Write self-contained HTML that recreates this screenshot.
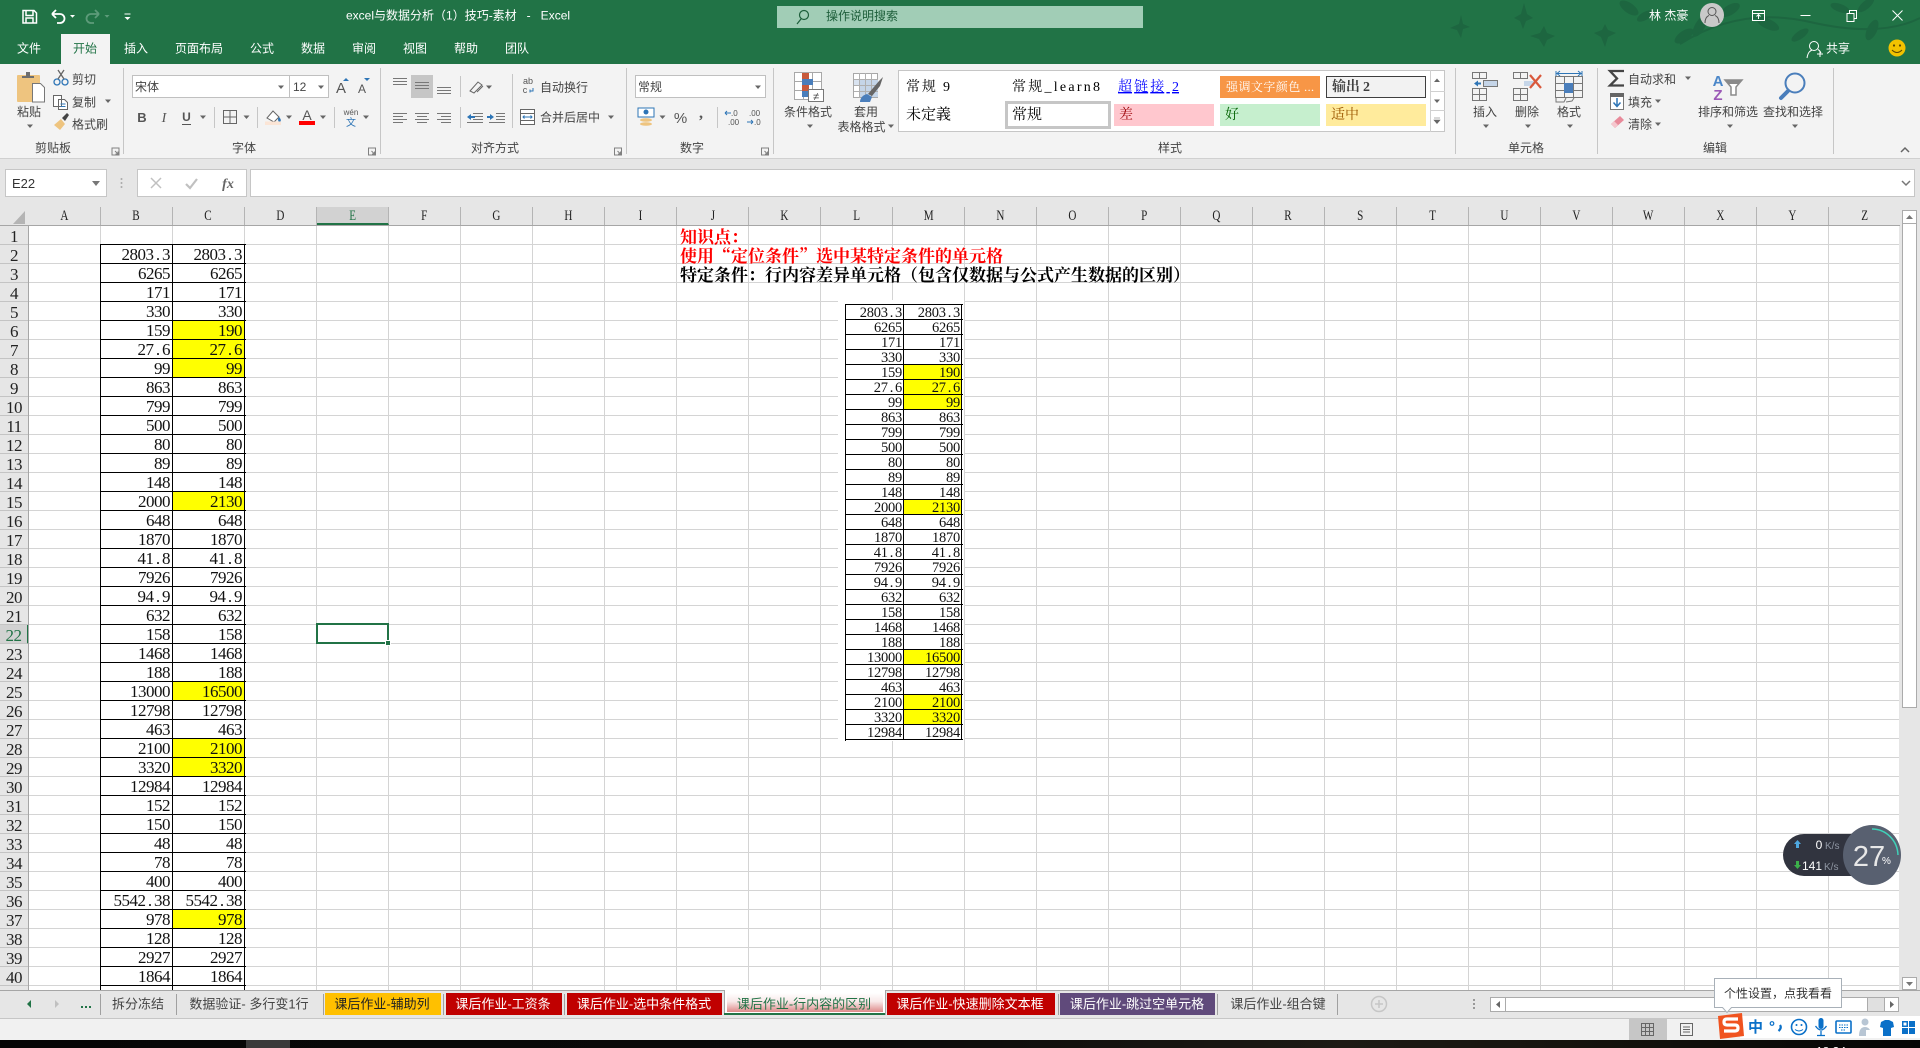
<!DOCTYPE html>
<html lang="zh"><head><meta charset="utf-8"><title>excel</title>
<style>
html,body{margin:0;padding:0;background:#fff}
#p{position:relative;width:1920px;height:1048px;overflow:hidden;background:#e6e6e6;font-family:"Liberation Sans","Noto Sans CJK SC",sans-serif}
#p>*{position:absolute}
#grid{left:29px;top:226px;width:1870px;height:764px;background-color:#fff;background-image:linear-gradient(to right,transparent 71px,#d4d4d4 71px),linear-gradient(to bottom,transparent 18px,#d4d4d4 18px);background-size:72px 19px}
#cols{left:29px;top:207px;height:18px;width:1871px;display:flex;overflow:hidden;background:#e6e6e6}
#cols span{flex:0 0 72px;box-sizing:border-box;border-right:1px solid #b4b4b4;height:18px;text-align:center;font:15px/18px "Liberation Serif",serif;color:#222}
#cols span i{display:inline-block;font-style:normal;transform:scaleX(.74)}
#cols span.e{background:#d2d2d2;color:#217346;border-bottom:2px solid #217346}
#hl{left:0;top:225px;width:1900px;height:1px;background:#a6a6a6}
#rows{left:0;top:226px;width:28px;height:764px;background:#e6e6e6;border-right:1px solid #a6a6a6;overflow:hidden}
#rows div{height:18px;border-bottom:1px solid #c4c4c4;text-align:center;font:17px/21px "Liberation Serif",serif;color:#222;letter-spacing:-.5px}
#rows div.e{background:#d2d2d2;color:#217346;border-right:2px solid #217346;margin-right:-1px}
.tb{border-left:1px solid #000;border-top:1px solid #000;color:#111;font-family:"Liberation Serif",serif;overflow:hidden}
.tb p{margin:0;display:flex;box-sizing:border-box;border-bottom:1px solid #000}
.tb b{font-weight:400;display:block;box-sizing:border-box;border-right:1px solid #000;text-align:right;white-space:nowrap}
.tb b.y{background:#ff0}
.tb u{text-decoration:none;display:inline-block;text-align:center}
#big{left:100px;top:244px;width:145px;height:745px;font-size:17px;letter-spacing:-.5px}
#big p{height:19px}
#big b{width:72px;padding-right:2px;line-height:20px;height:18px}
#big u{width:8.500px}
#pic{left:838px;top:300px;width:126px;height:441px;background:#fff}
#small{left:845px;top:304px;width:117px;height:436px;font-size:14.500px;letter-spacing:-.25px}
#small p{height:15px}
#small b{width:58px;padding-right:1px;line-height:16.500px;height:14px}
#small u{width:7.250px}
.k{left:680px;font:700 17px/19px "Noto Serif CJK SC",serif;white-space:nowrap}
#sel{left:316px;top:623px;width:69px;height:17px;border:2px solid #217346}
#sel:after{content:"";position:absolute;right:-4px;bottom:-4px;width:4px;height:4px;background:#217346;border:1px solid #fff}
#task{left:0;top:1040px;width:1920px;height:8px;background:linear-gradient(to right,#060606 0,#0a0a0a 45%,#1d1a14 70%,#17150f 80%,#050505 100%)}
#ui{left:0;top:0}
.t{font:12px "Liberation Sans","Noto Sans CJK SC",sans-serif;fill:#444;white-space:pre}
.m{text-anchor:middle}
.s{font-family:"Liberation Serif","Noto Serif CJK SC",serif;font-size:14px}
.l{font-size:13px}
</style></head><body><div id="p">
<div id="grid"></div>
<div id="cols"><span><i>A</i></span><span><i>B</i></span><span><i>C</i></span><span><i>D</i></span><span class="e"><i>E</i></span><span><i>F</i></span><span><i>G</i></span><span><i>H</i></span><span><i>I</i></span><span><i>J</i></span><span><i>K</i></span><span><i>L</i></span><span><i>M</i></span><span><i>N</i></span><span><i>O</i></span><span><i>P</i></span><span><i>Q</i></span><span><i>R</i></span><span><i>S</i></span><span><i>T</i></span><span><i>U</i></span><span><i>V</i></span><span><i>W</i></span><span><i>X</i></span><span><i>Y</i></span><span><i>Z</i></span></div>
<div id="hl"></div>
<div id="rows"><div>1</div><div>2</div><div>3</div><div>4</div><div>5</div><div>6</div><div>7</div><div>8</div><div>9</div><div>10</div><div>11</div><div>12</div><div>13</div><div>14</div><div>15</div><div>16</div><div>17</div><div>18</div><div>19</div><div>20</div><div>21</div><div class="e">22</div><div>23</div><div>24</div><div>25</div><div>26</div><div>27</div><div>28</div><div>29</div><div>30</div><div>31</div><div>32</div><div>33</div><div>34</div><div>35</div><div>36</div><div>37</div><div>38</div><div>39</div><div>40</div><div></div></div>
<div id="big" class="tb">
<p><b>2803<u>.</u>3</b><b>2803<u>.</u>3</b></p>
<p><b>6265</b><b>6265</b></p>
<p><b>171</b><b>171</b></p>
<p><b>330</b><b>330</b></p>
<p><b>159</b><b class="y">190</b></p>
<p><b>27<u>.</u>6</b><b class="y">27<u>.</u>6</b></p>
<p><b>99</b><b class="y">99</b></p>
<p><b>863</b><b>863</b></p>
<p><b>799</b><b>799</b></p>
<p><b>500</b><b>500</b></p>
<p><b>80</b><b>80</b></p>
<p><b>89</b><b>89</b></p>
<p><b>148</b><b>148</b></p>
<p><b>2000</b><b class="y">2130</b></p>
<p><b>648</b><b>648</b></p>
<p><b>1870</b><b>1870</b></p>
<p><b>41<u>.</u>8</b><b>41<u>.</u>8</b></p>
<p><b>7926</b><b>7926</b></p>
<p><b>94<u>.</u>9</b><b>94<u>.</u>9</b></p>
<p><b>632</b><b>632</b></p>
<p><b>158</b><b>158</b></p>
<p><b>1468</b><b>1468</b></p>
<p><b>188</b><b>188</b></p>
<p><b>13000</b><b class="y">16500</b></p>
<p><b>12798</b><b>12798</b></p>
<p><b>463</b><b>463</b></p>
<p><b>2100</b><b class="y">2100</b></p>
<p><b>3320</b><b class="y">3320</b></p>
<p><b>12984</b><b>12984</b></p>
<p><b>152</b><b>152</b></p>
<p><b>150</b><b>150</b></p>
<p><b>48</b><b>48</b></p>
<p><b>78</b><b>78</b></p>
<p><b>400</b><b>400</b></p>
<p><b>5542<u>.</u>38</b><b>5542<u>.</u>38</b></p>
<p><b>978</b><b class="y">978</b></p>
<p><b>128</b><b>128</b></p>
<p><b>2927</b><b>2927</b></p>
<p><b>1864</b><b>1864</b></p>
<p style="height:19px"><b>&nbsp;</b><b>&nbsp;</b></p>
</div>
<div class="k" style="top:226px;color:#f00">知识点：</div>
<div class="k" style="top:245px;color:#f00">使用“定位条件”选中某特定条件的单元格</div>
<div class="k" style="top:264px;color:#000">特定条件：行内容差异单元格（包含仅数据与公式产生数据的区别）</div>
<div id="pic"></div>
<div id="small" class="tb">
<p><b>2803<u>.</u>3</b><b>2803<u>.</u>3</b></p>
<p><b>6265</b><b>6265</b></p>
<p><b>171</b><b>171</b></p>
<p><b>330</b><b>330</b></p>
<p><b>159</b><b class="y">190</b></p>
<p><b>27<u>.</u>6</b><b class="y">27<u>.</u>6</b></p>
<p><b>99</b><b class="y">99</b></p>
<p><b>863</b><b>863</b></p>
<p><b>799</b><b>799</b></p>
<p><b>500</b><b>500</b></p>
<p><b>80</b><b>80</b></p>
<p><b>89</b><b>89</b></p>
<p><b>148</b><b>148</b></p>
<p><b>2000</b><b class="y">2130</b></p>
<p><b>648</b><b>648</b></p>
<p><b>1870</b><b>1870</b></p>
<p><b>41<u>.</u>8</b><b>41<u>.</u>8</b></p>
<p><b>7926</b><b>7926</b></p>
<p><b>94<u>.</u>9</b><b>94<u>.</u>9</b></p>
<p><b>632</b><b>632</b></p>
<p><b>158</b><b>158</b></p>
<p><b>1468</b><b>1468</b></p>
<p><b>188</b><b>188</b></p>
<p><b>13000</b><b class="y">16500</b></p>
<p><b>12798</b><b>12798</b></p>
<p><b>463</b><b>463</b></p>
<p><b>2100</b><b class="y">2100</b></p>
<p><b>3320</b><b class="y">3320</b></p>
<p><b>12984</b><b>12984</b></p>
</div>
<div id="sel"></div>
<div id="task"></div>
<svg id="ui" width="1920" height="1048" viewBox="0 0 1920 1048" xmlns="http://www.w3.org/2000/svg">
<defs>
<path id="ar" d="M-3-1.5h6l-3 3.5z" fill="#666"/>
<g id="la" fill="none" stroke="#808080"><path d="M-3.5-3.5h7v7h-7z"/><path d="M-.5-.5l3 3M2.5 0v2.5H0"/></g>
</defs>
<!-- title bar -->
<rect width="1920" height="64" fill="#217346"/>
<g fill="#1d6640">
<path d="M1450 28l9-4 2-9 2 9 7 3-7 2-2 9-4-8zM1514 18l7-4 3-11 3 11 6 4-7 3-3 8-3-8zM1530 36l10-3 4-7 3 7 8 3-8 4-3 7-5-8zM1594 33l8-3 3-6 3 6 8 3-8 4-3 10-4-10z"/>
<ellipse cx="1629" cy="8" rx="11" ry="5" transform="rotate(35 1629 8)"/><ellipse cx="1645" cy="16" rx="9" ry="4" transform="rotate(-30 1645 16)"/>
<ellipse cx="1684" cy="36" rx="11" ry="5" transform="rotate(-35 1684 36)"/><ellipse cx="1700" cy="26" rx="12" ry="5" transform="rotate(-60 1700 26)"/><ellipse cx="1730" cy="10" rx="11" ry="5" transform="rotate(-30 1730 10)"/><ellipse cx="1768" cy="24" rx="12" ry="5" transform="rotate(25 1768 24)"/><ellipse cx="1800" cy="35" rx="10" ry="4" transform="rotate(-35 1800 35)"/><ellipse cx="1840" cy="8" rx="10" ry="4" transform="rotate(20 1840 8)"/><ellipse cx="1872" cy="30" rx="11" ry="5" transform="rotate(-65 1872 30)"/><ellipse cx="1866" cy="5" rx="10" ry="4" transform="rotate(-40 1866 5)"/>
</g>
<path d="M1680 44q60-38 130-22t110-4" stroke="#1d6640" stroke-width="2" fill="none"/>
<path d="M23 10.500h11l2.500 2.500v10h-13.500zM26 10.500v5h7v-5M26 23v-5h7v5" stroke="#fff" stroke-width="1.500" fill="none"/>
<path d="M52 14h8a4.500 4.500 0 0 1 0 9h-3M52 14l4-4M52 14l4 4" stroke="#fff" stroke-width="1.800" fill="none"/>
<path d="M70 15h5l-2.500 2.800z" fill="#fff"/>
<path d="M99 14h-8a4.500 4.500 0 0 0 0 9h3M99 14l-4-4M99 14l-4 4" stroke="#5d9b7a" stroke-width="1.800" fill="none"/>
<path d="M104.500 15h5l-2.500 2.800z" fill="#5d9b7a"/>
<path d="M124.500 17h6l-3 3z" stroke="none" fill="#fff"/><path d="M124.500 14h6" stroke="#fff"/>
<text class="t" x="346" y="19.500" style="fill:#fff">excel与数据分析（1）技巧-素材   -   Excel</text>
<rect x="777" y="6" width="366" height="22" fill="#a1cdb6"/>
<circle cx="804" cy="15" r="4.500" fill="none" stroke="#1d5e3a" stroke-width="1.200"/><path d="M801 19l-4 5" stroke="#1d5e3a" stroke-width="1.200"/>
<text class="t" x="826" y="20" style="fill:#1d5e3a">操作说明搜索</text>
<text class="t" x="1649" y="19.500" style="fill:#fff">林 杰豪</text>
<circle cx="1712" cy="15" r="12" fill="#c9c9c9"/><circle cx="1712" cy="11.500" r="4" fill="none" stroke="#555"/><path d="M1705 23c0-6 3-7 4-7.500M1719 23c0-6-3-7-4-7.500" fill="none" stroke="#555"/>
<path d="M1752.500 10.500h12v10h-12zM1752.500 13.500h12M1758.500 19v-4M1756.500 16.500l2-2 2 2" fill="none" stroke="#fff"/>
<path d="M1800.500 15.500h10" stroke="#fff" stroke-width="1"/>
<path d="M1847 13.500h7v8h-7zM1849.500 13.500v-3h7v8h-2.500" fill="none" stroke="#fff"/>
<path d="M1892.500 10.500l10 10M1902.500 10.500l-10 10" stroke="#fff"/>
<!-- tabs -->
<rect x="61" y="34" width="49" height="30" fill="#f3f3f3"/>
<g class="tabs">
<text class="t m" x="29" y="52.500" style="fill:#fff">文件</text><text class="t m" x="85" y="52.500" style="fill:#217346">开始</text><text class="t m" x="136" y="52.500" style="fill:#fff">插入</text><text class="t m" x="199" y="52.500" style="fill:#fff">页面布局</text><text class="t m" x="262" y="52.500" style="fill:#fff">公式</text><text class="t m" x="313" y="52.500" style="fill:#fff">数据</text><text class="t m" x="364" y="52.500" style="fill:#fff">审阅</text><text class="t m" x="415" y="52.500" style="fill:#fff">视图</text><text class="t m" x="466" y="52.500" style="fill:#fff">帮助</text><text class="t m" x="517" y="52.500" style="fill:#fff">团队</text>
</g>
<circle cx="1814" cy="46" r="4.500" fill="none" stroke="#fff"/><path d="M1807 58c1-6 3-7 5-8M1821 53c-1-2-2-3-3-3.500M1817 54h6M1820 51v6" fill="none" stroke="#fff"/>
<text class="t" x="1826" y="52.500" style="fill:#fff">共享</text>
<circle cx="1897" cy="48" r="8.500" fill="#f2c200"/><circle cx="1894" cy="45.500" r="1.100" fill="#5a4500"/><circle cx="1900" cy="45.500" r="1.100" fill="#5a4500"/><path d="M1892 50q5 5 10 0" fill="none" stroke="#5a4500"/>
<!-- ribbon -->
<rect y="64" width="1920" height="94" fill="#f3f3f3"/><rect y="158" width="1920" height="1" fill="#d0d0d0"/>
<g stroke="#c6c6c6"><path d="M123.500 68v86M380.500 68v86M626.500 68v86M773.500 68v86M1455.500 68v86M1597.500 68v86M1833.500 68v86"/><path d="M214.500 107v21M257.500 107v21M334.500 107v21M460.500 76v21M460.500 107v21M512.500 74v54M717.500 107v21"/></g>
<!-- clipboard -->
<rect x="17" y="75" width="23" height="27" rx="1" fill="#eec47f"/><path d="M22 78v-2h4v-4h4v4h4v2z" fill="#6e6e6e"/><path d="M32.500 83.500h8l4 4v14.500h-12z" fill="#fff" stroke="#777"/>
<text class="t m" x="29" y="116">粘贴</text><use href="#ar" x="30" y="126"/>
<circle cx="57" cy="82" r="3" fill="none" stroke="#2e75b6" stroke-width="1.300"/><circle cx="65" cy="82" r="3" fill="none" stroke="#2e75b6" stroke-width="1.300"/><path d="M58 79l6-9M64 79l-6-9" stroke="#666" stroke-width="1.300"/>
<text class="t" x="72" y="83.500">剪切</text>
<path d="M53.500 95.500h8v11h-8zM58.500 99.500h6l3 3v7h-9z" fill="#fff" stroke="#666"/><path d="M60.500 104h5M60.500 106.500h5" stroke="#2e75b6"/>
<text class="t" x="72" y="106.500">复制</text><use href="#ar" x="108" y="101"/>
<path d="M54 125l7-6 4 5-5 6z" fill="#eec47f"/><path d="M62 118l5-5 2 2-4 6z" fill="#444"/>
<text class="t" x="72" y="128.500">格式刷</text>
<text class="t m" x="53" y="152">剪贴板</text><use href="#la" x="115.500" y="151.500"/>
<!-- font -->
<rect x="132.500" y="75.500" width="196" height="22" fill="#fff" stroke="#c0c0c0"/><path d="M289.500 75v23" stroke="#c0c0c0"/>
<text class="t" x="135" y="91" style="fill:#444">宋体</text><use href="#ar" x="281" y="87"/>
<text class="t" x="293" y="91">12</text><use href="#ar" x="321" y="87"/>
<text x="341" y="93" font-family="Liberation Sans" font-size="15" fill="#555" text-anchor="middle">A</text><path d="M343 81h6l-3-3z" fill="#2e75b6"/>
<text x="362" y="93" font-family="Liberation Sans" font-size="12" fill="#555" text-anchor="middle">A</text><path d="M364 78h6l-3 3z" fill="#2e75b6"/>
<text x="142" y="122" font-family="Liberation Sans" font-weight="700" font-size="13" fill="#555" text-anchor="middle">B</text>
<text x="164" y="122" font-family="Liberation Serif" font-style="italic" font-size="14" fill="#555" text-anchor="middle">I</text>
<text x="186.500" y="121" font-family="Liberation Sans" font-weight="700" font-size="12" fill="#555" text-anchor="middle">U</text><path d="M182 124.500h9" stroke="#555"/>
<use href="#ar" x="203" y="117"/>
<path d="M223.500 110.500h13v13h-13zM230 110.500v13M223.500 117h13" fill="none" stroke="#666"/><use href="#ar" x="246.500" y="117"/>
<path d="M267 118l6-7 6 6-5 5z" fill="#fff" stroke="#666"/><path d="M279 117q3 3 1 5-2 0-2-3z" fill="#2e75b6"/><rect x="265" y="121.500" width="16" height="3.500" fill="#fbe5d6"/><use href="#ar" x="289" y="117"/>
<text x="307" y="120" font-family="Liberation Sans" font-size="14" fill="#555" text-anchor="middle">A</text><rect x="299" y="121" width="16" height="4" fill="#f00"/><use href="#ar" x="323" y="117"/>
<text x="351" y="115" font-family="Liberation Sans" font-size="8" fill="#555" text-anchor="middle">wén</text><text class="t m" x="351" y="126" style="font-size:10px;fill:#2e75b6">文</text><use href="#ar" x="366" y="117"/>
<text class="t m" x="244" y="152">字体</text><use href="#la" x="372" y="151.500"/>
<!-- align -->
<rect x="411" y="75" width="22" height="23" fill="#c6c6c6"/>
<g stroke="#777" fill="none">
<path d="M393 78.500h14M393 81.500h14M393 84.500h14M415 82.500h14M415 85.500h14M415 88.500h14M437 87.500h14M437 90.500h14M437 93.500h14"/>
<path d="M393 113.500h14M393 116.500h10M393 119.500h14M393 122.500h10M415 113.500h14M417 116.500h10M415 119.500h14M417 122.500h10M437 113.500h14M441 116.500h10M437 119.500h14M441 122.500h10"/>
<path d="M473 113.500h10M473 116.500h10M473 119.500h10M467 122.500h16M489 122.500h16M496 113.500h9M496 116.500h9M496 119.500h9"/>
<path d="M470 91l8-9 4 3-8 8zM477 92l6-6" stroke="#666"/>
</g>
<path d="M467 117l4-3v2h4v2h-4v2zM494 117l-4-3v2h-3v2h3v2z" fill="#2e75b6"/>
<use href="#ar" x="489" y="87"/>
<text x="528" y="84" font-family="Liberation Sans" font-size="9" fill="#555" text-anchor="middle">ab</text><text x="525" y="93" font-family="Liberation Sans" font-size="9" fill="#555" text-anchor="middle">c</text><path d="M533 88v3h-3M530 89.500v3" stroke="#2e75b6" fill="none"/>
<text class="t" x="540" y="91.500">自动换行</text>
<rect x="520.500" y="109.500" width="14" height="15" fill="#fff" stroke="#666"/><path d="M520.500 113.500h14M520.500 120.500h14" stroke="#666"/><path d="M523 117h9M524.500 115.500l-1.500 1.500 1.500 1.500M530.500 115.500l1.500 1.500-1.500 1.500" stroke="#2e75b6" fill="none"/>
<text class="t" x="540" y="121.500">合并后居中</text><use href="#ar" x="611" y="117"/>
<text class="t m" x="495" y="152">对齐方式</text><use href="#la" x="618" y="151.500"/>
<!-- number -->
<rect x="635.500" y="75.500" width="130" height="22" fill="#fff" stroke="#c0c0c0"/>
<text class="t" x="638" y="91">常规</text><use href="#ar" x="758" y="87"/>
<rect x="638" y="108" width="16" height="9" fill="#fff" stroke="#2e75b6"/><circle cx="646" cy="112" r="2.500" fill="#2e75b6"/><ellipse cx="646" cy="120" rx="6" ry="1.800" fill="#eec47f"/><ellipse cx="646" cy="124" rx="6" ry="1.800" fill="#eec47f"/><use href="#ar" x="662.500" y="117"/>
<text x="680.500" y="123" font-family="Liberation Sans" font-size="15" fill="#555" text-anchor="middle">%</text>
<text x="701" y="118" font-family="Liberation Serif" font-weight="700" font-size="16" fill="#555" text-anchor="middle">,</text>
<text x="731" y="116" font-family="Liberation Sans" font-size="8" fill="#555">.0</text><text x="728" y="125" font-family="Liberation Sans" font-size="8" fill="#555">.00</text><path d="M725 113h6M725 113l2-2M725 113l2 2" stroke="#2e75b6" fill="none"/>
<text x="749" y="116" font-family="Liberation Sans" font-size="8" fill="#555">.00</text><text x="754" y="125" font-family="Liberation Sans" font-size="8" fill="#555">.0</text><path d="M747 122h6M753 122l-2-2M753 122l-2 2" stroke="#2e75b6" fill="none"/>
<text class="t m" x="692" y="152">数字</text><use href="#la" x="765" y="151.500"/>
<!-- styles -->
<g stroke="#a8a8a8" fill="#fff"><rect x="794.500" y="72.500" width="27" height="27"/></g>
<path d="M803.500 72v28M812.500 72v28M794 81.500h28M794 90.500h28" stroke="#a8a8a8"/>
<rect x="802" y="73" width="7" height="6" fill="#c85a3c"/><rect x="802" y="79" width="11" height="6" fill="#4a7ebb"/><rect x="802" y="85" width="7" height="6" fill="#c85a3c"/><rect x="802" y="91" width="6" height="6" fill="#4a7ebb"/>
<rect x="808.500" y="89.500" width="15" height="12" fill="#fff" stroke="#777"/><text x="816" y="100" font-family="Liberation Sans" font-size="11" fill="#444" text-anchor="middle">≠</text>
<text class="t m" x="808" y="116">条件格式</text><use href="#ar" x="810" y="126"/>
<rect x="853.500" y="73.500" width="24" height="24" fill="#fff" stroke="#a8a8a8"/><rect x="854" y="80" width="24" height="6" fill="#d9e3f0"/><rect x="860" y="80" width="18" height="17" fill="#c5d5e8"/>
<path d="M859.500 73v25M865.500 73v25M871.500 73v25M854 79.500h24M854 85.500h24M854 91.500h24" stroke="#b0b0b0" fill="none"/>
<path d="M868 94l11-13 4-4-3 9-8 10z" fill="#666"/><path d="M860 102c0-4 3-7 7-8l5 3-2 5z" fill="#4a7ebb"/>
<text class="t m" x="866" y="116">套用</text><text class="t m" x="861.500" y="131">表格格式</text><use href="#ar" x="891" y="126"/>
<text class="t m" x="1170" y="152">样式</text>
<rect x="898.500" y="70.500" width="546" height="61" fill="#fff" stroke="#c6c6c6"/>
<path d="M1430.500 70v62M1430 91.500h15M1430 110.500h15" stroke="#d0d0d0"/>
<path d="M1434 82h6l-3-3.500z" fill="#666"/><path d="M1434 99.500h6l-3 3.500z" fill="#666"/><path d="M1434 118h6M1434 120h6l-3 3.500z" stroke="#666" stroke-width=".6" fill="#666"/>
<text class="t s" x="906" y="91" style="fill:#000" textLength="44">常规 9</text>
<text class="t s" x="1012" y="91" style="fill:#000" textLength="88">常规_learn8</text>
<text class="t s" x="1118" y="91" style="fill:#00f;text-decoration:underline" textLength="61">超链接 2</text>
<rect x="1220" y="76" width="100" height="22" fill="#f79646"/><text class="t s" x="1226" y="91" style="fill:#fff;font-size:12px" textLength="88">强调文字颜色 ...</text>
<rect x="1326.500" y="76.500" width="99" height="21" fill="#f2f2f2" stroke="#3f3f3f"/><text class="t s" x="1332" y="91" style="fill:#3f3f3f;font-weight:700" textLength="38">输出 2</text>
<text class="t s" x="906" y="119" style="fill:#000;font-size:15px">未定義</text>
<rect x="1006.500" y="102.500" width="103" height="25" fill="#fff" stroke="#c6c6c6" stroke-width="3"/><text class="t s" x="1012" y="119" style="fill:#000;font-size:15px">常规</text>
<rect x="1114" y="104" width="100" height="22" fill="#ffc7ce"/><text class="t s" x="1119" y="119" style="fill:#9c0006">差</text>
<rect x="1220" y="104" width="100" height="22" fill="#c6efce"/><text class="t s" x="1225" y="119" style="fill:#006100">好</text>
<rect x="1326" y="104" width="100" height="22" fill="#ffeb9c"/><text class="t s" x="1331" y="119" style="fill:#9c5700">适中</text>
<!-- cells -->
<g fill="none" stroke="#777">
<path d="M1472.500 72.500h14v6h-14zM1479.500 72.500v6M1472.500 88.500h14v12h-14zM1479.500 88.500v12M1472.500 94.500h14"/>
<path d="M1483.500 80.500h14v6h-14zM1490.500 80.500v6" />
<path d="M1513.500 72.500h14v6h-14zM1520.500 72.500v6M1513.500 88.500h14v12h-14zM1520.500 88.500v12M1513.500 94.500h14"/>
<path d="M1555.500 76.500h27v21h-27zM1564.500 76.500v21M1573.500 76.500v21M1555.500 83.500h27M1555.500 90.500h27"/>
<path d="M1556 98v4h8l2-4 M1566 102l6-1 2-3" />
</g>
<rect x="1484" y="81" width="13" height="5" fill="#c5d5e8"/><rect x="1524" y="81" width="10" height="5" fill="#c5d5e8"/>
<path d="M1474 83.500l4-3v2h3v2h-3v2z" fill="#2e75b6"/>
<path d="M1530 75l11 13M1541 75l-11 13" stroke="#d9583b" stroke-width="2.200"/>
<rect x="1564" y="83" width="9" height="10" fill="#4a7ebb"/>
<path d="M1556 73.500h26M1556 71v5M1582 71v5M1560 71l-3 2.500 3 2.500M1578 71l3 2.500-3 2.500" stroke="#2e75b6" fill="none"/>
<text class="t m" x="1485" y="116">插入</text><use href="#ar" x="1486" y="126"/>
<text class="t m" x="1527" y="116">删除</text><use href="#ar" x="1528" y="126"/>
<text class="t m" x="1569" y="116">格式</text><use href="#ar" x="1570" y="126"/>
<text class="t m" x="1526" y="152">单元格</text>
<!-- editing -->
<path d="M1624 71h-14l7 7.500-7 7h14" fill="none" stroke="#444" stroke-width="2.300"/>
<text class="t" x="1628" y="83.500">自动求和</text><use href="#ar" x="1688" y="78"/>
<rect x="1610.500" y="93.500" width="13" height="16" fill="#fff" stroke="#777"/><rect x="1610" y="93" width="14" height="4" fill="#666"/><path d="M1617 98v8M1613.500 102.500l3.500 4 3.500-4" fill="none" stroke="#2e75b6" stroke-width="1.500"/>
<text class="t" x="1628" y="106.500">填充</text><use href="#ar" x="1658" y="101"/>
<path d="M1611 124l9-8 4 4-9 8z" fill="#e88a9a"/><path d="M1611 124l3-3 4 4-3 3z" fill="#f5c6cd"/>
<text class="t" x="1628" y="128.500">清除</text><use href="#ar" x="1658" y="124"/>
<text x="1718" y="86" font-family="Liberation Sans" font-weight="700" font-size="15" fill="#4a86c8" text-anchor="middle">A</text><text x="1718" y="100" font-family="Liberation Sans" font-weight="700" font-size="15" fill="#9b59b6" text-anchor="middle">Z</text>
<path d="M1725 80h17l-6 7v8h-5v-8z" fill="#fff" stroke="#8a8a8a" stroke-width="1.500"/><path d="M1725 80h17l-4 4h-9z" fill="#8a8a8a"/>
<text class="t m" x="1728" y="116">排序和筛选</text><use href="#ar" x="1730" y="126"/>
<circle cx="1795" cy="83" r="9.500" fill="none" stroke="#4a7ebb" stroke-width="2"/><path d="M1788 91l-7 7" stroke="#4a7ebb" stroke-width="4" stroke-linecap="round"/>
<text class="t m" x="1793" y="116">查找和选择</text><use href="#ar" x="1795" y="126"/>
<text class="t m" x="1715" y="152">编辑</text>
<path d="M1901 152l4-4 4 4" fill="none" stroke="#666" stroke-width="1.500"/>
<!-- formula bar -->
<rect x="5.500" y="169.500" width="101" height="27" fill="#fff" stroke="#c6c6c6"/>
<text x="12" y="188" font-family="Liberation Sans" font-size="13" fill="#333">E22</text><path d="M92 181h8l-4 5z" fill="#777"/>
<g fill="#aaa"><circle cx="121.500" cy="179" r="1"/><circle cx="121.500" cy="183" r="1"/><circle cx="121.500" cy="187" r="1"/></g>
<rect x="137.500" y="169.500" width="109" height="27" fill="#fff" stroke="#c6c6c6"/>
<path d="M151 178l10 10M161 178l-10 10" stroke="#c0c0c0" stroke-width="1.500"/><path d="M186 184l4 4 7-9" fill="none" stroke="#c0c0c0" stroke-width="2.200"/>
<text x="228" y="188" font-family="Liberation Serif" font-style="italic" font-weight="700" font-size="14" fill="#666" text-anchor="middle">fx</text>
<rect x="250.500" y="169.500" width="1664" height="27" fill="#fff" stroke="#c6c6c6"/>
<path d="M1902 181l4 4 4-4" fill="none" stroke="#777" stroke-width="1.500"/>
<!-- corner -->
<path d="M25 211v13H13z" fill="#b4b4b4"/>
<!-- v scrollbar -->
<rect x="1900" y="207" width="20" height="783" fill="#e6e6e6"/>
<rect x="1902.500" y="223.500" width="14" height="484" fill="#fff" stroke="#ababab"/>
<rect x="1902.500" y="210.500" width="14" height="13" fill="#fff" stroke="#ababab"/><path d="M1906 219h7l-3.500-4z" fill="#777"/>
<rect x="1902.500" y="977.500" width="14" height="12" fill="#fff" stroke="#ababab"/><path d="M1906 982h7l-3.500 4z" fill="#777"/>
<!-- sheet tabs -->
<rect y="990" width="1920" height="28" fill="#e6e6e6"/><rect y="990" width="1920" height="1" fill="#a6a6a6"/><rect y="1018" width="1920" height="1" fill="#c6c6c6"/>
<path d="M31 1000v8l-4-4z" fill="#217346"/><path d="M55 1000v8l4-4z" fill="#c0c0c0"/>
<g fill="#217346"><rect x="81" y="1006" width="2" height="2"/><rect x="85" y="1006" width="2" height="2"/><rect x="89" y="1006" width="2" height="2"/></g>
<g stroke="#a0a0a0"><path d="M100.500 994v21M176.500 994v21M323.500 994v21M443.500 994v21M564.500 994v21M1058.500 994v21M1217.500 994v21M1337.500 994v21"/></g>
<text class="t l m" x="138" y="1008.500">拆分冻结</text>
<text class="t l m" x="249" y="1008.500">数据验证- 多行变1行</text>
<rect x="325" y="993" width="116" height="22" fill="#ffc000"/><text class="t l m" x="382" y="1008.500" style="fill:#222">课后作业-辅助列</text>
<rect x="446" y="993" width="116" height="22" fill="#c00000"/><text class="t l m" x="503" y="1008.500" style="fill:#fff">课后作业-工资条</text>
<rect x="567" y="993" width="155" height="22" fill="#c00000"/><text class="t l m" x="644" y="1008.500" style="fill:#fff">课后作业-选中条件格式</text>
<linearGradient id="g" x1="0" y1="0" x2="0" y2="1"><stop offset="0" stop-color="#fff"/><stop offset=".45" stop-color="#f8e8e8"/><stop offset="1" stop-color="#de8a8a"/></linearGradient>
<path d="M724 1015v-25h161.500v25" fill="#fff"/><path d="M724.500 990v25M885.500 990v25" stroke="#a6a6a6"/>
<rect x="727" y="993" width="156" height="19" fill="url(#g)"/><rect x="724" y="1013" width="161" height="2" fill="#217346"/>
<text class="t l m" x="804" y="1008.500" style="fill:#217346">课后作业-行内容的区别</text>
<rect x="887" y="993" width="168" height="22" fill="#c00000"/><text class="t l m" x="970" y="1008.500" style="fill:#fff">课后作业-快速删除文本框</text>
<rect x="1060" y="993" width="155" height="22" fill="#604a7b"/><text class="t l m" x="1137" y="1008.500" style="fill:#fff">课后作业-跳过空单元格</text>
<text class="t l m" x="1278" y="1008.500">课后作业-组合键</text>
<circle cx="1379" cy="1004" r="7.500" fill="none" stroke="#c6c6c6" stroke-width="1.500"/><path d="M1375 1004h8M1379 1000v8" stroke="#c6c6c6" stroke-width="1.500"/>
<g fill="#999"><rect x="1473" y="999" width="2" height="2"/><rect x="1473" y="1003" width="2" height="2"/><rect x="1473" y="1007" width="2" height="2"/></g>
<!-- h scrollbar -->
<rect x="1490.500" y="997.500" width="408" height="14" fill="#e0e0e0" stroke="#ababab"/>
<rect x="1505.500" y="997.500" width="362" height="14" fill="#fff" stroke="#ababab"/>
<rect x="1490.500" y="997.500" width="15" height="14" fill="#fff" stroke="#ababab"/><path d="M1500 1001v7l-4-3.500z" fill="#666"/>
<rect x="1884.500" y="997.500" width="14" height="14" fill="#fff" stroke="#ababab"/><path d="M1890 1001v7l4-3.500z" fill="#666"/>
<!-- status -->
<rect y="1019" width="1920" height="21" fill="#f1f1f1"/>
<rect x="1629" y="1019" width="38" height="21" fill="#c6c6c6"/>
<path d="M1641.500 1023.500h12v12h-12zM1645.500 1023.500v12M1649.500 1023.500v12M1641.500 1027.500h12M1641.500 1031.500h12" fill="none" stroke="#666"/>
<path d="M1680.500 1023.500h12v12h-12zM1683 1027h7M1683 1029.500h7M1683 1032h7" fill="none" stroke="#666"/>
<!-- IME -->
<rect x="1740" y="1016" width="180" height="22" fill="#fff"/>
<path d="M1718 1016l24-3 2 23-24 3z" fill="#f0531f"/><path d="M1738 1019h-11q-3 0-3 3t3 3h8q3 0 3 3t-3 3h-11" fill="none" stroke="#fff" stroke-width="3.200"/>
<text x="1755.500" y="1032" font-family="Noto Sans CJK SC" font-weight="700" font-size="15" fill="#0a70c8" text-anchor="middle">中</text>
<circle cx="1772" cy="1023.500" r="1.800" fill="none" stroke="#0a70c8" stroke-width="1.200"/><path d="M1780 1025q2 3-1.500 6" fill="none" stroke="#0a70c8" stroke-width="2.200"/>
<circle cx="1799" cy="1027" r="7.500" fill="none" stroke="#0a70c8" stroke-width="1.600"/><circle cx="1796.500" cy="1025" r="1" fill="#0a70c8"/><circle cx="1801.500" cy="1025" r="1" fill="#0a70c8"/><path d="M1795 1029.500q4 3 8 0" fill="none" stroke="#0a70c8"/>
<rect x="1818.500" y="1018" width="5" height="11" rx="2.500" fill="#0a70c8"/><path d="M1815.500 1026q5.500 8 11 0M1821 1031v4M1817 1035.500h8" fill="none" stroke="#0a70c8" stroke-width="1.300"/>
<rect x="1836" y="1021" width="15" height="12" rx="1" fill="none" stroke="#0a70c8" stroke-width="1.600"/><path d="M1839 1025h9M1839 1027.500h9M1841 1030h5" stroke="#0a70c8" stroke-dasharray="1.500 1"/>
<circle cx="1865" cy="1022" r="3.500" fill="#b8c6d4"/><path d="M1859 1036c0-6 2-9 6-9s6 3 6 9z" fill="#b8c6d4"/><rect x="1866" y="1030" width="6" height="6" fill="#fff"/>
<path d="M1881 1022l4-2h4l4 2 1 5-3 1v8h-8v-8l-3-1z" fill="#0a70c8"/>
<g fill="#0a70c8"><rect x="1902" y="1021" width="6" height="6"/><rect x="1909" y="1021" width="6" height="6"/><rect x="1902" y="1028" width="6" height="6"/><rect x="1909" y="1028" width="6" height="6"/></g>
<rect x="1903.500" y="1022.500" width="3" height="3" fill="#fff"/>
<!-- tooltip -->
<path d="M1714.500 978.500h127v29h-110l-4.500 5-4.500-5h-8z" fill="#fff" stroke="#a8b0b8"/>
<text class="t" x="1724" y="997.500" style="fill:#333">个性设置，点我看看</text>
<!-- net widget -->
<rect x="1783" y="834" width="90" height="42" rx="21" fill="#31343f"/>
<ellipse cx="1872" cy="855" rx="29" ry="30" fill="#586070"/>
<path d="M1872 829a26 27 0 0 1 26 26" fill="none" stroke="#3fd0b8" stroke-width="1.500"/>
<text x="1869" y="866" font-family="Liberation Sans" font-size="29" fill="#e8e8e8" text-anchor="middle">27</text>
<text x="1886.500" y="864" font-family="Liberation Sans" font-size="10" fill="#fff" text-anchor="middle">%</text>
<path d="M1797.500 840l3.500 4h-2v4h-3v-4h-2z" fill="#4ea8e0"/>
<path d="M1797.500 869l3.500-4h-2v-4h-3v4h-2z" fill="#3cb04a"/>
<text x="1819" y="849" font-family="Liberation Sans" font-size="12" fill="#fff" text-anchor="middle">0</text>
<text x="1825" y="849" font-family="Liberation Sans" font-size="10" fill="#8f96a3">K/s</text>
<text x="1812" y="870" font-family="Liberation Sans" font-size="12" fill="#fff" text-anchor="middle">141</text>
<text x="1824" y="870" font-family="Liberation Sans" font-size="10" fill="#8f96a3">K/s</text>
<!-- taskbar -->
<rect x="246" y="1040" width="44" height="8" fill="#3a3a3a"/>
<text x="1831" y="1055.500" font-family="Liberation Sans" font-size="12" fill="#fff" text-anchor="middle">18:34</text>
</svg>
</div></body></html>
